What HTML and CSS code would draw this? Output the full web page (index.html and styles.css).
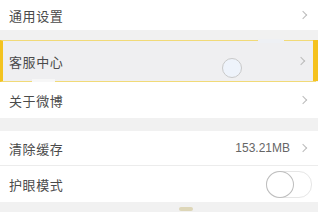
FILE: index.html
```html
<!DOCTYPE html>
<html>
<head>
<meta charset="utf-8">
<link rel="stylesheet" href="styles.css">
</head>
<body>
<div class="page">
  <div class="row r1"><span class="label">通用设置</span><span class="chev"></span></div>
  <div class="gap g1"></div>
  <div class="row hl">
    <span class="label">客服中心</span>
    <span class="chev"></span>
    <span class="touch"></span>
    <span class="gap-top"></span>
    <span class="gap-bot"></span>
  </div>
  <div class="row r3"><span class="label">关于微博</span><span class="chev"></span></div>
  <div class="gap g2"></div>
  <div class="row r4"><span class="label">清除缓存</span><span class="value">153.21MB</span><span class="chev"></span></div>
  <div class="row r5"><span class="label">护眼模式</span><span class="toggle"><span class="knob"></span></span></div>
  <div class="bottom"><span class="blip"></span></div>
</div>
</body>
</html>
```
FILE: styles.css
```css
html, body {
  margin: 0;
  padding: 0;
  background: #f1f1f1;
}
.page {
  width: 318px;
  height: 212px;
  overflow: hidden;
  font-family: "Noto Sans CJK SC", "Liberation Sans", sans-serif;
  display: flex;
  flex-direction: column;
}
.row {
  position: relative;
  display: flex;
  align-items: center;
  background: #fff;
  padding: 0 10px 0 9px;
  box-sizing: border-box;
  flex-shrink: 0;
}
.label {
  font-size: 13px;
  color: #4a4a4a;
  letter-spacing: 0.6px;
  flex: 1;
  line-height: 1;
}
.chev {
  width: 5px;
  height: 5px;
  border-top: 1.2px solid #bbb;
  border-right: 1.2px solid #bbb;
  transform: rotate(45deg);
  margin-right: 2px;
}
.r1 { height: 30px; }
.g1 { height: 10px; flex-shrink: 0; }
.hl {
  height: 42px;
  background: #efeff1;
  border-top: 1.5px solid #f1da78;
  border-bottom: 1.5px solid #f1da78;
  border-left: 3px solid #f3c320;
  padding-left: 6px;
  padding-right: 8px;
  margin-right: 2px;
}
.hl::after {
  content: "";
  position: absolute;
  right: -2px;
  top: -1px;
  bottom: 0;
  width: 5px;
  background: #f5c21e;
}
.hl .chev { margin-right: 4px; }
.touch {
  position: absolute;
  left: 219px;
  top: 17px;
  width: 18px;
  height: 18px;
  border-radius: 50%;
  background: #eef3fb;
  border: 1.2px solid #c9c9c9;
}
.gap-top {
  position: absolute;
  left: 255px;
  top: -2px;
  width: 26px;
  height: 4px;
  background: #eef0f4;
}
.gap-bot {
  position: absolute;
  left: 29px;
  bottom: -2px;
  width: 23px;
  height: 4px;
  background: #f7f7f7;
}
.r3 { height: 36px; }
.g2 { height: 13px; flex-shrink: 0; }
.r4 {
  height: 35px;
  border-bottom: 1px solid #ececec;
}
.value {
  font-family: "Liberation Sans", sans-serif;
  font-size: 12px;
  color: #666;
  margin-right: 10px;
}
.r5 { height: 36px; }
.toggle {
  position: relative;
  width: 44px;
  height: 25px;
  border-radius: 13px;
  border: 1px solid #e6e6e6;
  background: #fff;
  margin-right: -4px;
}
.knob {
  position: absolute;
  left: -1px;
  top: -1px;
  width: 26px;
  height: 25px;
  border-radius: 50%;
  border: 1px solid #bdbdbd;
  background: #fff;
}
.bottom {
  position: relative;
  flex: 1;
}
.blip {
  position: absolute;
  left: 179px;
  top: 5px;
  width: 14px;
  height: 4px;
  background: #ddd6b8;
  border-radius: 2px;
}
```
